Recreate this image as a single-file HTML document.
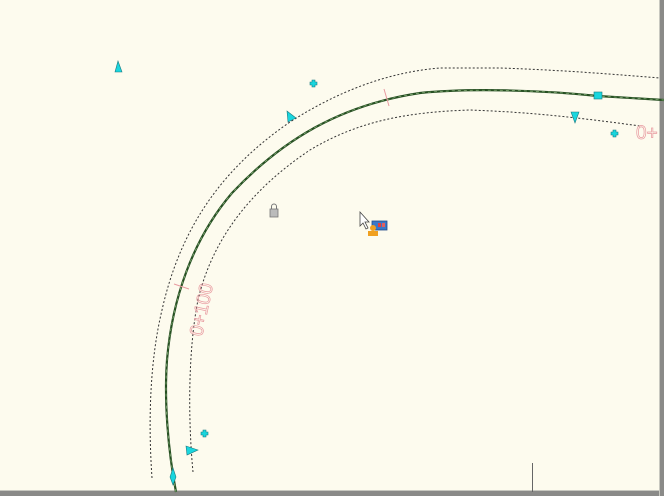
<!DOCTYPE html>
<html><head><style>
html,body{margin:0;padding:0;background:#fdfbee;}
svg{display:block}
</style></head><body>
<svg width="664" height="496" viewBox="0 0 664 496" xmlns="http://www.w3.org/2000/svg">
<rect width="664" height="496" fill="#fdfbee"/>
<rect x="0" y="491" width="664" height="5" fill="#8a8a88"/>
<rect x="0" y="490" width="664" height="1" fill="#c8c8c0"/>
<rect x="660" y="0" width="4" height="496" fill="#8a8a88"/>
<rect x="659" y="0" width="1" height="496" fill="#c8c8c0"/>
<path d="M152 478 C148 420 150 360 162 310 C180 230 220 170 290 122 C340 90 390 72 440 68 L500 68 C560 70 610 74 660 78" fill="none" stroke="#333" stroke-width="1" stroke-dasharray="2,2"/>
<path d="M193 472 C188 420 188 350 198 300 C212 240 250 190 310 150 C360 120 410 112 470 110 C520 112 560 115 640 126" fill="none" stroke="#333" stroke-width="1" stroke-dasharray="2,2"/>
<path d="M176 492 C168 450 164 400 167 360 C172 300 192 240 232 193 C282 140 340 105 420 93 C470 88 540 90 598 96 L664 100" fill="none" stroke="#264f22" stroke-width="2.2"/>
<path d="M176 492 C168 450 164 400 167 360 C172 300 192 240 232 193 C282 140 340 105 420 93 C470 88 540 90 598 96 L664 100" fill="none" stroke="#8fb880" stroke-width="0.7" stroke-dasharray="3,3"/>
<line x1="384" y1="89" x2="389" y2="106" stroke="#e89aa0" stroke-width="1"/>
<line x1="174" y1="284" x2="189" y2="289" stroke="#e89aa0" stroke-width="1"/>
<text x="0" y="0" transform="translate(202,337) rotate(-78)" font-family="Liberation Sans, sans-serif" font-size="19" fill="none" stroke="#e89aa0" stroke-width="0.7">0+100</text>
<text x="636" y="139" font-family="Liberation Sans, sans-serif" font-size="19" fill="none" stroke="#e89aa0" stroke-width="0.7">0+</text>
<g fill="#19d6de" stroke="#1a7a80" stroke-width="0.6">
<polygon points="118,61 115,72 122,72"/>
<polygon points="287,111 288,122 296,118"/>
<path d="M312 80h3v2h2v3h-2v2h-3v-2h-2v-3h2z"/>
<rect x="594" y="92" width="8" height="7"/>
<polygon points="571,112 579,112 575,123"/>
<path d="M613 130h3v2h2v3h-2v2h-3v-2h-2v-3h2z"/>
<path d="M203 430h3v2h2v3h-2v2h-3v-2h-2v-3h2z"/>
<polygon points="186,446 187,455 198,450"/>
<polygon points="173,468 170,477 173,485 176,477"/>
</g>
<rect x="270" y="209" width="8" height="8" fill="#bbb" stroke="#777" stroke-width="0.8"/>
<path d="M271.5 209v-2.5a2.5 2.5 0 0 1 5 0v2.5" fill="none" stroke="#777" stroke-width="1"/>
<path d="M360 212 L360 226 L363 223 L366 229 L368 228 L365 222 L369 222 Z" fill="#fff" stroke="#444" stroke-width="0.8"/>
<rect x="372" y="221" width="15" height="9" fill="#3b78c8" stroke="#224c88" stroke-width="0.8"/>
<rect x="378" y="223" width="3" height="4" fill="#e04040"/>
<rect x="382" y="223" width="3" height="4" fill="#e06060"/>
<circle cx="373" cy="228" r="3" fill="#f0a020"/>
<rect x="368" y="231" width="10" height="5" fill="#f0a020"/>
<line x1="532.5" y1="463" x2="532.5" y2="492" stroke="#666" stroke-width="1"/>
</svg>
</body></html>
